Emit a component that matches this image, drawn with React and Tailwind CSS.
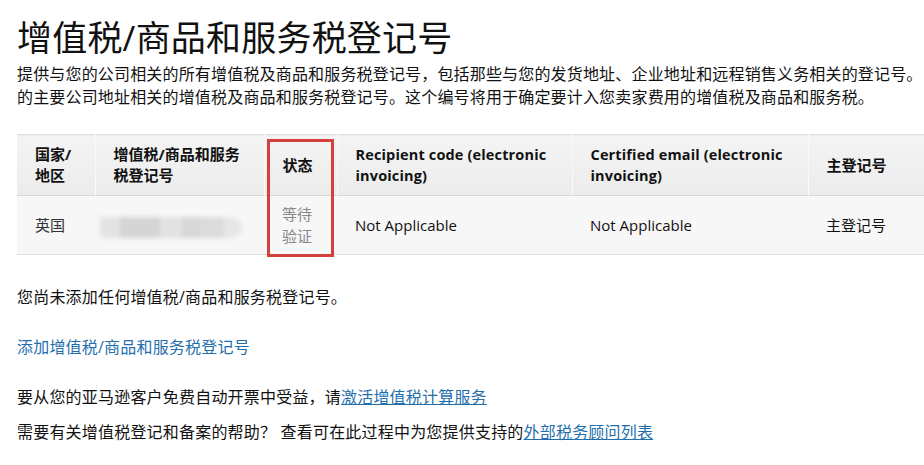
export default function App() {
  const font = { fontFamily: '"Open Sans", "Noto Sans CJK SC", sans-serif' };
  return (
    <div className="w-[924px] h-[465px] overflow-hidden bg-white text-[#111]" style={font}>
      <div className="pl-[17px] pt-[17px]">
        <h1 className="text-[35px] leading-[42px] font-normal whitespace-nowrap tracking-[0.2px]">增值税/商品和服务税登记号</h1>
        <div className="mt-[4px] text-[16px] leading-[23px] whitespace-nowrap tracking-[0.17px]">
          <div>提供与您的公司相关的所有增值税及商品和服务税登记号，包括那些与您的发货地址、企业地址和远程销售义务相关的登记号。</div>
          <div>的主要公司地址相关的增值税及商品和服务税登记号。这个编号将用于确定要计入您卖家费用的增值税及商品和服务税。</div>
        </div>

        <div className="relative mt-[25px] w-[1000px]">
          <table className="w-[1000px] table-fixed border-collapse">
            <colgroup>
              <col className="w-[78px]" />
              <col className="w-[169px]" />
              <col className="w-[73px]" />
              <col className="w-[235px]" />
              <col className="w-[236px]" />
              <col />
            </colgroup>
            <thead>
              <tr className="h-[61px] bg-gradient-to-b from-[#f4f4f4] to-[#ececec] border-t border-[#e2e2e2] border-b border-b-[#d6d6d6] text-[15px] leading-[21px] font-bold text-left">
                <th className="px-[18px] align-middle font-bold">国家/地区</th>
                <th className="px-[18px] align-middle font-bold border-l border-l-[#f9f9f9]">增值税/商品和服务税登记号</th>
                <th className="pl-[18px] pr-[5px] align-middle font-bold border-l border-l-[#f9f9f9]">状态</th>
                <th className="px-[18px] align-middle font-bold border-l border-l-[#f9f9f9] text-[14.5px] tracking-[0.15px]">Recipient code (electronic invoicing)</th>
                <th className="px-[18px] align-middle font-bold border-l border-l-[#f9f9f9] text-[14.5px] tracking-[0.15px]">Certified email (electronic invoicing)</th>
                <th className="px-[18px] align-middle font-bold border-l border-l-[#f9f9f9]">主登记号</th>
              </tr>
            </thead>
            <tbody>
              <tr className="h-[59px] bg-[#f7f7f7] border-b border-[#e0e0e0] text-[15px] leading-[22px] text-left">
                <td className="px-[18px] align-middle text-[#333]">英国</td>
                <td className="pl-[5px] align-middle">
                  <div className="flex h-[21px] w-[142px] mt-[4px] blur-[2px] rounded-r-full overflow-hidden">
                    <div className="w-[20px] bg-[#e4e4e4]"></div>
                    <div className="w-[40px] bg-[#d5d5d5]"></div>
                    <div className="w-[22px] bg-[#e2e2e2]"></div>
                    <div className="w-[18px] bg-[#d7d7d7]"></div>
                    <div className="w-[24px] bg-[#dcdcdc]"></div>
                    <div className="w-[18px] bg-[#e6e6e6]"></div>
                  </div>
                </td>
                <td className="pl-[18px] pr-[5px] align-middle text-[#888]">
                  <div className="w-[32px]">等待验证</div>
                </td>
                <td className="px-[18px] align-middle">Not Applicable</td>
                <td className="px-[18px] align-middle">Not Applicable</td>
                <td className="px-[18px] align-middle">主登记号</td>
              </tr>
            </tbody>
          </table>
          <div className="absolute left-[250px] top-[5px] w-[67px] h-[118px] border-[3px] border-[#d4403c]"></div>
        </div>

        <div className="mt-[31px] text-[16px] leading-[22px] whitespace-nowrap tracking-[0.2px]">
          <p>您尚未添加任何增值税/商品和服务税登记号。</p>
          <p className="mt-[28px]"><a className="text-[#1f6fae]">添加增值税/商品和服务税登记号</a></p>
          <p className="mt-[28px]">要从您的亚马逊客户免费自动开票中受益，请<a className="text-[#1f6fae] underline">激活增值税计算服务</a></p>
          <p className="mt-[13px]">需要有关增值税登记和备案的帮助？ 查看可在此过程中为您提供支持的<a className="text-[#1f6fae] underline">外部税务顾问列表</a></p>
        </div>
      </div>
    </div>
  );
}
